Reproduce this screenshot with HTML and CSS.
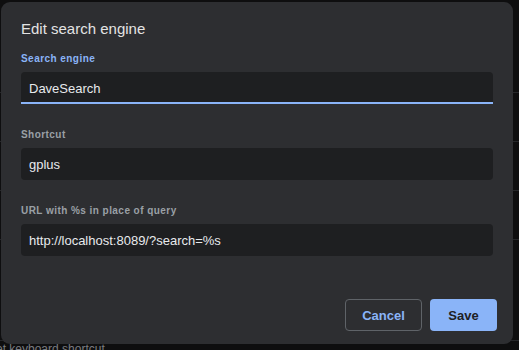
FILE: index.html
```html
<!DOCTYPE html>
<html lang="en">

<head>
    <meta charset="UTF-8">
    <title>Edit search engine</title>
    <link rel="stylesheet" href="styles.css">
</head>

<body>
    <div class="backdrop">
        <div class="bg-row"></div>
        <div class="bg-row"></div>
        <div class="bg-row"></div>
        <div class="bg-row"></div>
        <div class="bg-row bg-tall"></div>
        <div class="bg-text">Set keyboard shortcut</div>
    </div>

    <div class="dialog">
        <h1 class="dialog-title">Edit search engine</h1>

        <div class="field">
            <label class="field-label active">Search engine</label>
            <div class="field-input focused">DaveSearch</div>
        </div>

        <div class="field">
            <label class="field-label">Shortcut</label>
            <div class="field-input">gplus</div>
        </div>

        <div class="field">
            <label class="field-label">URL with %s in place of query</label>
            <div class="field-input">http://localhost:8089/?search=%s</div>
        </div>

        <div class="dialog-buttons">
            <button class="btn btn-cancel">Cancel</button>
            <button class="btn btn-save">Save</button>
        </div>
    </div>
</body>

</html>
```

FILE: styles.css
```css
body {
    margin: 0;
    width: 519px;
    height: 350px;
    overflow: hidden;
    background-color: #0e0e0f;
    font-family: "Liberation Sans", Arial, sans-serif;
    position: relative;
}

.backdrop {
    display: flex;
    flex-direction: column;
    padding-top: 44px;
}

.bg-row {
    height: 48px;
    border-bottom: 1px solid #26272a;
}

.bg-tall {
    height: 100px;
}

.bg-text {
    margin-top: 1px;
    margin-left: -12px;
    font-size: 12px;
    color: #7a7c80;
}

.dialog {
    position: absolute;
    left: 1px;
    top: 2px;
    width: 512px;
    height: 342px;
    box-sizing: border-box;
    padding: 17px 20px 0 20px;
    background-color: #2d2e31;
    border-radius: 9px;
    display: flex;
    flex-direction: column;
}

.dialog-title {
    margin: 0;
    font-size: 15px;
    line-height: 20px;
    font-weight: normal;
    color: #e3e3e3;
}

.field {
    display: flex;
    flex-direction: column;
    margin-top: 13px;
}

.field + .field {
    margin-top: 24px;
}

.field-label {
    font-size: 10px;
    line-height: 14px;
    font-weight: bold;
    letter-spacing: 0.45px;
    color: #9aa0a6;
    margin-bottom: 6px;
}

.field-label.active {
    color: #8ab4f8;
}

.field-input {
    height: 32px;
    box-sizing: border-box;
    padding: 0 8px;
    display: flex;
    align-items: center;
    background-color: #1e1f21;
    border-radius: 4px;
    font-size: 13px;
    color: #e8eaed;
}

.field-input.focused {
    border-bottom: 2px solid #8ab4f8;
    border-radius: 4px 4px 0 0;
    padding-top: 2px;
}

.dialog-buttons {
    display: flex;
    justify-content: flex-end;
    gap: 8px;
    margin-top: 43px;
    margin-right: -4px;
}

.btn {
    height: 32px;
    box-sizing: border-box;
    border-radius: 4px;
    font-family: "Liberation Sans", Arial, sans-serif;
    font-size: 13px;
    font-weight: bold;
    cursor: pointer;
}

.btn-cancel {
    width: 77px;
    background-color: transparent;
    border: 1px solid #5f6368;
    color: #8ab4f8;
}

.btn-save {
    width: 67px;
    background-color: #8ab4f8;
    border: none;
    color: #202124;
}
```
